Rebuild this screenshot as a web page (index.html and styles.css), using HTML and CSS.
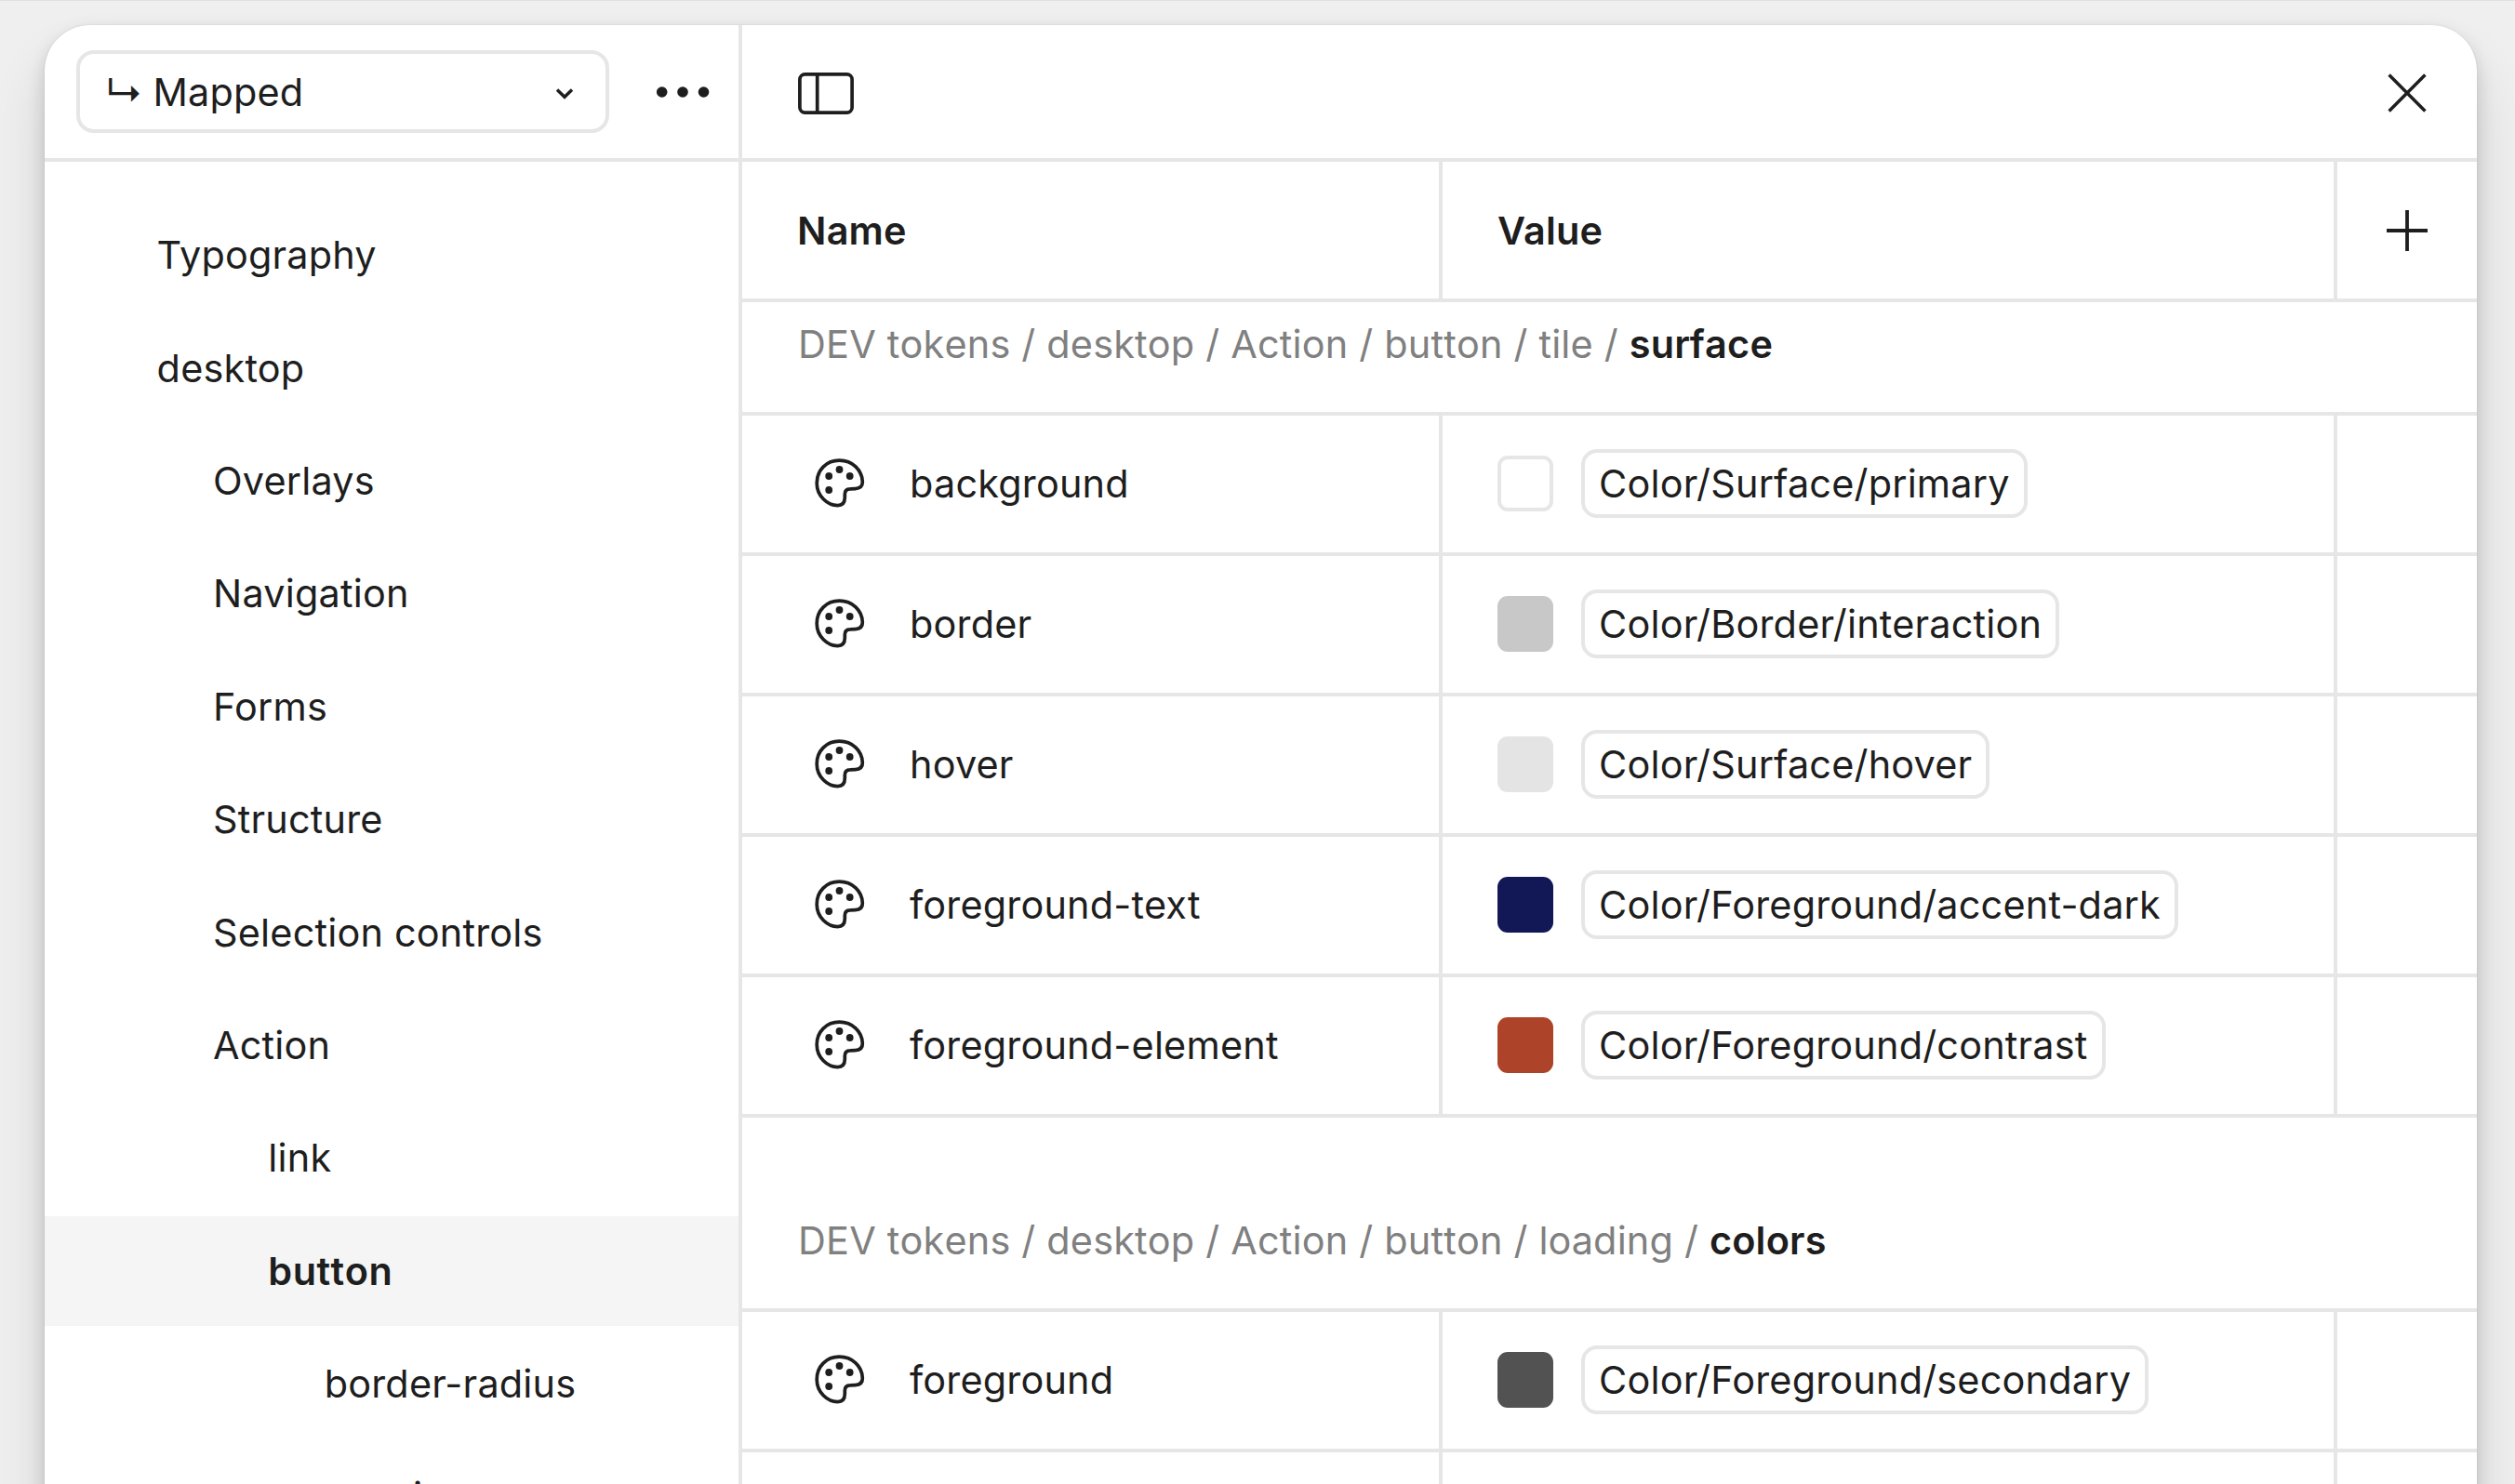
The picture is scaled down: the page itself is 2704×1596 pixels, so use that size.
FILE: index.html
```html
<!DOCTYPE html>
<html lang="en">
<head>
<meta charset="utf-8">
<title>Variables</title>
<link rel="stylesheet" href="styles.css">
</head>
<body>
<svg class="defs" aria-hidden="true">
  <symbol id="palette" viewBox="0 0 54 54">
    <path d="M26.5 2.2C12.5 2.2 2.2 12.6 2.2 26.5C2.2 40.5 13.6 50.6 24.5 50.6C30.5 50.6 32.3 46.5 32.3 42V38.5C32.3 34.5 34 32.8 38 32.8L43.5 32.6C49 32.3 51.5 29.5 51.3 25C50.8 12.5 40.5 2.2 26.5 2.2Z" fill="none" stroke="currentColor" stroke-width="3.7"/>
    <circle cx="15.2" cy="19" r="3.9"/><circle cx="26.5" cy="12" r="3.9"/><circle cx="37.7" cy="19" r="3.9"/><circle cx="15.2" cy="34" r="3.9"/>
  </symbol>
</svg>
<div class="window">
  <aside class="sidebar">
    <div class="sidebar-head">
      <button class="select"><span>↳ Mapped</span>
        <svg class="chevron" viewBox="0 0 20 14"><path d="M2 2.5L10 10.3L18 2.5" fill="none" stroke="currentColor" stroke-width="3.4"/></svg>
      </button>
      <svg class="dots" viewBox="0 0 58 14"><circle cx="6.7" cy="7" r="5.8"/><circle cx="29" cy="7" r="5.8"/><circle cx="51.5" cy="7" r="5.8"/></svg>
    </div>
    <nav class="tree">
      <a class="item l1">Typography</a>
      <a class="item l1">desktop</a>
      <a class="item l2">Overlays</a>
      <a class="item l2">Navigation</a>
      <a class="item l2">Forms</a>
      <a class="item l2">Structure</a>
      <a class="item l2">Selection controls</a>
      <a class="item l2">Action</a>
      <a class="item l3">link</a>
      <a class="item l3 active">button</a>
      <a class="item l4">border-radius</a>
      <a class="item l4">spacing</a>
    </nav>
  </aside>
  <main class="main">
    <div class="toolbar">
      <svg class="panel-icon" viewBox="0 0 60 45"><rect x="1.9" y="1.9" width="56.2" height="41.2" rx="5.6" fill="none" stroke="currentColor" stroke-width="3.7"/><path d="M20.7 2V43" stroke="currentColor" stroke-width="3.7"/></svg>
      <svg class="close" viewBox="0 0 44 44"><path d="M2.6 2.6L41.4 41.4M41.4 2.6L2.6 41.4" stroke="currentColor" stroke-width="3.5"/></svg>
    </div>
    <div class="row head">
      <div class="cell">Name</div>
      <div class="cell">Value</div>
      <div class="cell add"><svg class="plus" viewBox="0 0 44 44"><path d="M22 0V44M0 22H44" stroke="currentColor" stroke-width="3.8"/></svg></div>
    </div>
    <div class="group first"><span>DEV tokens / desktop / Action / button / tile / <b>surface</b></span></div>
    <div class="row"><div class="cell"><svg class="palette"><use href="#palette"/></svg>background</div><div class="cell"><i class="swatch white"></i><span class="pill">Color/Surface/primary</span></div><div class="cell"></div></div>
    <div class="row"><div class="cell"><svg class="palette"><use href="#palette"/></svg>border</div><div class="cell"><i class="swatch silver"></i><span class="pill">Color/Border/interaction</span></div><div class="cell"></div></div>
    <div class="row"><div class="cell"><svg class="palette"><use href="#palette"/></svg>hover</div><div class="cell"><i class="swatch light"></i><span class="pill">Color/Surface/hover</span></div><div class="cell"></div></div>
    <div class="row"><div class="cell"><svg class="palette"><use href="#palette"/></svg>foreground-text</div><div class="cell"><i class="swatch navy"></i><span class="pill">Color/Foreground/accent-dark</span></div><div class="cell"></div></div>
    <div class="row"><div class="cell"><svg class="palette"><use href="#palette"/></svg>foreground-element</div><div class="cell"><i class="swatch rust"></i><span class="pill">Color/Foreground/contrast</span></div><div class="cell"></div></div>
    <div class="group"><span>DEV tokens / desktop / Action / button / loading / <b>colors</b></span></div>
    <div class="row"><div class="cell"><svg class="palette"><use href="#palette"/></svg>foreground</div><div class="cell"><i class="swatch dark"></i><span class="pill">Color/Foreground/secondary</span></div><div class="cell"></div></div>
    <div class="row"><div class="cell"></div><div class="cell"></div><div class="cell"></div></div>
  </main>
</div>
</body>
</html>
```
FILE: styles.css
```css
* { box-sizing: border-box; }
html, body { height: 100%; overflow: hidden; }
body {
  margin: 0;
  padding: 26px 41px 0 48px;
  background: #efefef;
  border-top: 1px solid #e0e0e0;
  font: 400 41.4px/60px Inter, sans-serif;
  letter-spacing: 0.2px;
  color: #1e1e1e;
}
svg { display: block; flex: none; fill: currentColor; }
.defs { display: none; }
.window {
  display: flex;
  height: 1760px;
  background: #fff;
  border-radius: 49px;
  overflow: hidden;
  box-shadow: 0 0 2px rgba(0,0,0,.12), 0 38px 60px rgba(0,0,0,.12), 0 8px 19px rgba(0,0,0,.15);
}
.sidebar { width: 750px; flex: none; border-right: 4px solid #e6e6e6; }
.sidebar-head {
  display: flex;
  align-items: center;
  height: 147px;
  padding: 0 0 0 34px;
  border-bottom: 4px solid #e6e6e6;
}
.select {
  display: flex;
  align-items: center;
  justify-content: space-between;
  width: 573px;
  height: 89px;
  padding: 0 34px 0 27px;
  border: 4px solid #e6e6e6;
  border-radius: 19px;
  background: none;
  font: inherit;
  letter-spacing: inherit;
  word-spacing: -1.5px;
  color: inherit;
}
.chevron { width: 20px; height: 14px; margin-top: 4px; }
.dots { width: 58px; height: 14px; margin-left: 50px; }
.tree { display: flex; flex-direction: column; gap: 3.7px; padding-top: 41.5px; }
.item { display: flex; align-items: center; height: 117.7px; flex: none; }
.l1 { padding-left: 120.6px; }
.l2 { padding-left: 181px; }
.l3 { padding-left: 240.3px; }
.l4 { padding-left: 300.7px; }
.active { background: #f5f5f5; font-weight: 600; font-kerning: none; letter-spacing: 0.5px; }
.main { flex: 1; }
.toolbar {
  display: flex;
  align-items: center;
  justify-content: space-between;
  height: 147px;
  padding: 4px 53px 0 60px;
  border-bottom: 4px solid #e6e6e6;
}
.panel-icon { width: 60px; height: 45px; }
.close { width: 44px; height: 44px; margin-top: -1px; }
.row {
  display: grid;
  grid-template-columns: 753px 962px 1fr;
  height: 151px;
  border-bottom: 4px solid #e6e6e6;
}
.cell { display: flex; align-items: center; padding-left: 59px; border-right: 4px solid #e6e6e6; }
.cell:last-child { border-right: 0; }
.row:not(.head) .cell { padding-bottom: 1px; }
.head { font-weight: 600; }
.head .add { padding: 0; justify-content: center; }
.plus { width: 44px; height: 44px; }
.group {
  display: flex;
  align-items: flex-end;
  height: 209px;
  padding: 0 0 43px 60px;
  border-bottom: 4px solid #e6e6e6;
  font-kerning: none;
  color: #808080;
}
.group.first { height: 122px; }
.group b { font-weight: 600; color: #1e1e1e; }
.palette { width: 54px; height: 54px; margin: 0 48px 0 19px; }
.swatch { width: 60px; height: 60px; margin-right: 30px; border-radius: 11px; }
.white { border: 4px solid #e6e6e6; }
.silver { background: #c8c8c8; }
.light { background: #e4e4e4; }
.navy { background: #121755; }
.rust { background: #ad4429; }
.dark { background: #525252; }
.pill {
  height: 74px;
  padding: 3px 15px;
  border: 4px solid #e6e6e6;
  border-radius: 17px;
}
```
